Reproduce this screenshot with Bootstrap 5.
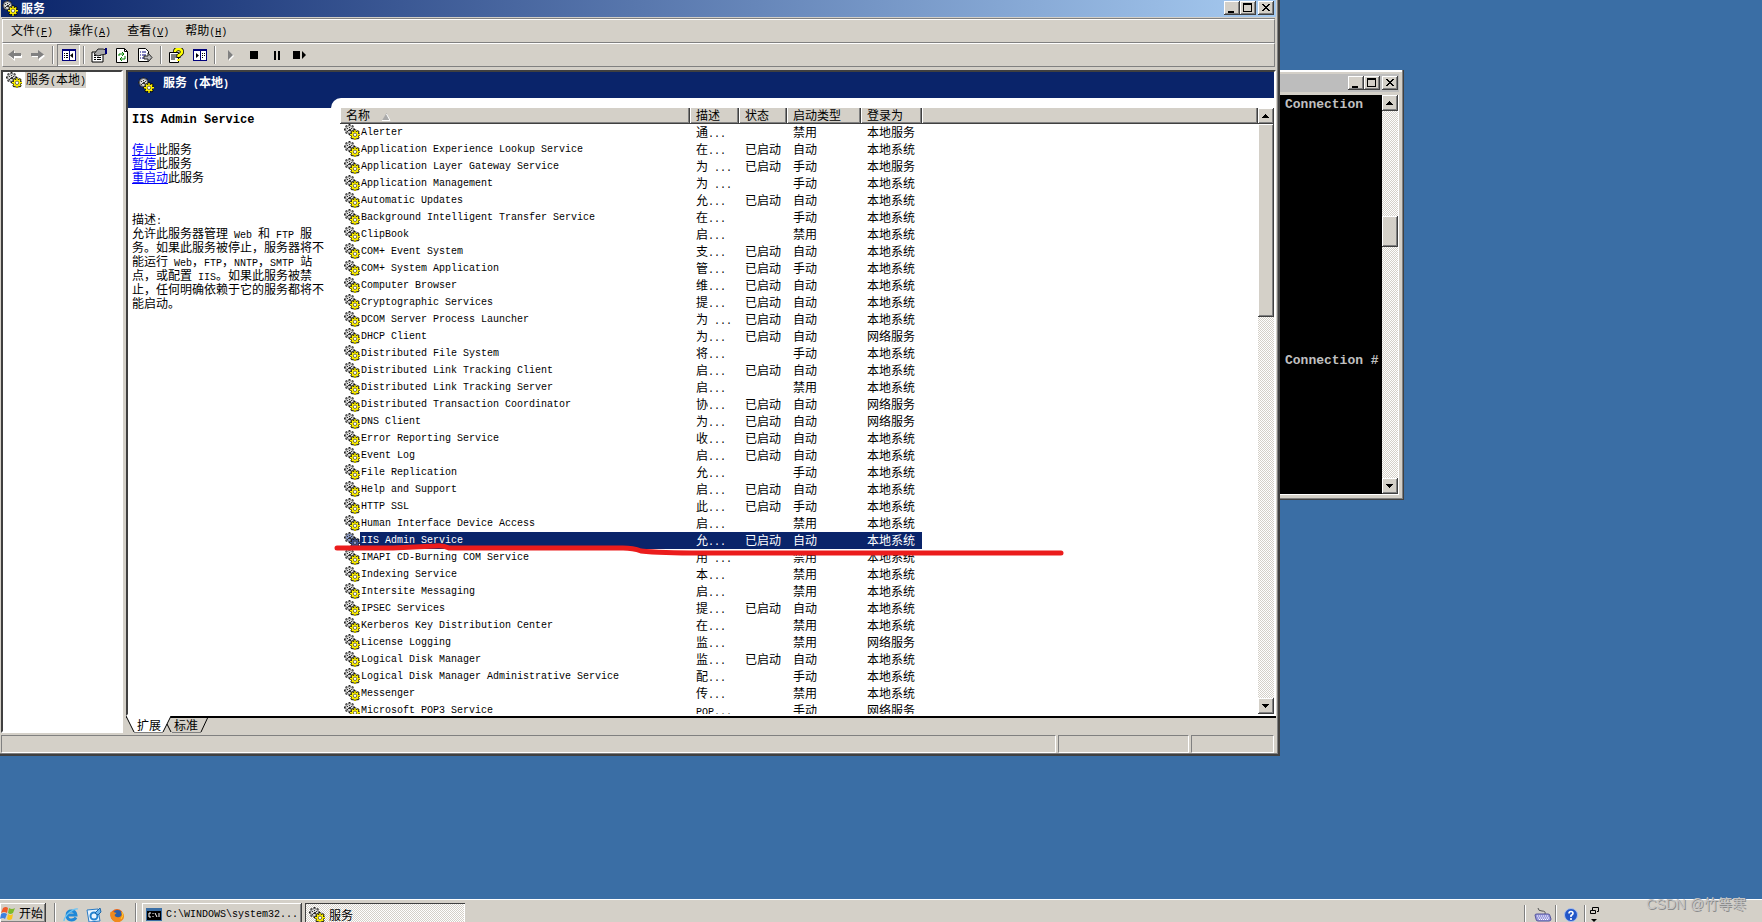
<!DOCTYPE html>
<html lang="zh-CN">
<head>
<meta charset="utf-8">
<meta name="viewport" content="width=device-width, initial-scale=1">
<title>服务</title>
<link rel="stylesheet" href="https://cdn.jsdelivr.net/npm/bootstrap@5.3.0/dist/css/bootstrap.min.css">
<style>
:root{--face:#d4d0c8;--shade:#808080;--dark:#404040;--navy:#0a246a;--desk:#3a6ea5}
body{font:12px/14px "Noto Sans CJK SC",sans-serif;color:#000;background:var(--desk);overflow:hidden}
button{font:inherit;color:inherit;border:0;padding:0;background:var(--face)}
svg{display:block;flex:none}
.lat{font-family:"Liberation Mono",monospace;font-size:10px;line-height:1px}
.face{background:var(--face)}
.dither{background:conic-gradient(#fff 25%,var(--face) 0 50%,#fff 0 75%,var(--face) 0) 0 0/2px 2px}
.raised{background:var(--face);box-shadow:inset -1px -1px var(--dark),inset 1px 1px #fff,inset -2px -2px var(--shade)}
.sunken{border:1px solid;border-color:var(--shade) #fff #fff var(--shade)}
.pane{border:2px solid;border-color:var(--dark) #fff #fff var(--dark);background:#fff}
.desktop{padding-bottom:143px}
.main-win{border-right:2px solid var(--dark);border-bottom:2px solid var(--dark);box-shadow:inset -1px -1px var(--shade);padding:0 2px 1px 1px}
.title-bar{height:17px;padding:0 2px 2px 1px;background:linear-gradient(90deg,#0a246a,#a6caf0);color:#fff;font-size:12px;font-weight:700}
.cap{width:16px;height:14px}
.bar{height:24px;border:1px solid;border-color:#fff var(--shade) var(--shade) #fff}
.bar button{height:22px}
.menu{gap:16px;padding:0 0 2px 8px}
.menu button,.tools button{background:none}
.sep{width:2px;height:18px;border-left:1px solid var(--shade);border-right:1px solid #fff;flex:none}
.tools button{width:23px;display:flex;align-items:center;justify-content:center}
.tools .sep{margin:0 3px}
.tools .on{box-shadow:inset 1px 1px var(--shade),inset -1px -1px #fff}
.tree{width:122px}
.node{background:var(--face);padding:0 0 0 1px;height:16px;line-height:13px}
.head{background:var(--navy);color:#fff;font-weight:700;height:36px}
.info{width:203px;padding:5px 0 0 4px;white-space:nowrap;flex:none}
.info h1{font:700 12px/14px "Liberation Mono",monospace;margin:0 0 15px}
.info a{color:#00f}
.list-wrap{margin-top:-10px;border-radius:10px 0 0 0;padding:10px 0 0 9px;background:#fff}
.grid{table-layout:fixed;width:100%;border-collapse:separate;border-spacing:0;white-space:nowrap}
.grid th{height:16px;padding:0 0 0 6px;font-weight:400;line-height:14px;vertical-align:top;background:var(--face);box-shadow:inset -1px -1px var(--dark),inset 1px 0 #fff,inset -2px -2px var(--shade)}
.grid td{height:17px;line-height:15px;padding:0 0 0 6px;overflow:hidden;vertical-align:top}
.grid td:first-child{padding-left:4px}
.nm{padding-left:1px;flex:1 1 0;height:17px;line-height:17px}
.sel{--y:#3a4f8c;--w:#8a9bc8}
.sel .nm,.sel td:not(:first-child):not(:last-child){background:var(--navy);color:#fff}
.sbar{width:16px;flex:none}
.sbar button{width:16px;height:16px;display:flex;align-items:center;justify-content:center;flex:none}
.tabs{height:17px;border-top:2px solid #000}
.tabs svg{top:-2px;left:0}
.tabs button{background:none;height:13px;line-height:13px}
.status{height:18px;gap:2px}
.con{margin-top:70px;width:124px;height:430px;border-right:1px solid var(--dark);border-bottom:1px solid var(--dark);box-shadow:inset -1px -1px var(--shade),inset 0 2px #fff;padding:4px 4px 4px 0}
.con-title{height:18px;background:#bdbdbd;padding:0 0 0 68px;margin-bottom:3px}
.term{font:700 13px/16px "Liberation Mono",monospace;color:#c0c0c0;background:#000;padding:2px 0 0 5px;white-space:nowrap;overflow:hidden}
.taskbar{height:23px;border-top:1px solid #fff;padding-top:3px}
.taskbar .sep{height:20px}
.task{height:23px;width:160px;padding-left:4px!important}
.mark-pen{left:333px;top:538px;pointer-events:none}
.wm{right:16px;bottom:8px;font:14px/20px "Liberation Sans","Noto Sans CJK SC",sans-serif;color:#c4c4c4;text-shadow:1px 1px #8c8c8c}
</style>
</head>
<body class="vh-100 d-flex flex-column">
<svg width="0" height="0" class="position-absolute">
<symbol id="gears" viewBox="0 0 16 16">
<path d="M5.500 0v11M0 5.500h11M1.700 1.700l7.600 7.600M9.300 1.700 1.700 9.300" stroke="#222" stroke-width="1.800"/>
<circle cx="5.5" cy="5.5" r="4" style="fill:var(--w,#d8d8d8)" stroke="#555" stroke-width=".8"/>
<path d="M3 4h1v1H3zM5 3h1v1H5zM7 4h1v1H7zM4 6h1v1H4zM5 5h2v2H5zM3 7h1v1H3z" fill="#333"/>
<path d="M11 5.500v10.500M5.700 10.800H16M7.200 7l7.600 7.600M14.800 7l-7.600 7.600" stroke="#000" stroke-width="2.600"/>
<circle cx="11" cy="10.800" r="3.800" fill="#000"/>
<path d="M11 6v10M6 10.800h10M7.700 7.500l6.600 6.600M14.300 7.500l-6.600 6.600" style="stroke:var(--y,#fff200)" stroke-width="1.400"/>
<circle cx="11" cy="10.800" r="2.600" fill="none" style="stroke:var(--y,#fff200)" stroke-width="1.600"/>
<circle cx="11" cy="10.800" r="1.700" style="fill:var(--w,#fff)" stroke="#222" stroke-width=".6"/>
</symbol>
<symbol id="min" viewBox="0 0 16 14"><path d="M4 10h6v2H4z"/></symbol>
<symbol id="max" viewBox="0 0 16 14"><path d="M3 2h9v9H3zM4 4v6h7V4z" fill-rule="evenodd"/></symbol>
<symbol id="cls" viewBox="0 0 16 14"><path d="M4 3h2v1h1v1h2V4h1V3h2v1h-1v1h-1v1H9v1h1v1h1v1h1v1h-2V9H9V8H7v1H6v1H4V9h1V8h1V7h1V6H6V5H5V4H4z"/></symbol>
<symbol id="up" viewBox="0 0 8 4"><path d="M3 0h1v1h1v1h1v1h1v1H0V3h1V2h1V1h1z"/></symbol>
<symbol id="down" viewBox="0 0 8 4"><path d="M0 0h7v1H6v1H5v1H4v1H3V3H2V2H1V1H0z"/></symbol>
</svg>

<main class="desktop d-flex flex-grow-1 align-items-stretch position-relative" style="min-height:0">
<section class="main-win face flex-grow-1 d-flex flex-column" style="min-width:0">
<header class="title-bar d-flex align-items-center flex-shrink-0">
<svg width="16" height="16"><use href="#gears"/></svg><span class="flex-grow-1" style="margin-left:3px">服务</span>
<button class="cap raised" aria-label="最小化"><svg width="16" height="14"><use href="#min"/></svg></button>
<button class="cap raised" aria-label="最大化"><svg width="16" height="14"><use href="#max"/></svg></button>
<button class="cap raised" style="margin-left:2px" aria-label="关闭"><svg width="16" height="14"><use href="#cls"/></svg></button>
</header>
<div class="flex-shrink-0" style="border-top:1px solid #808080;margin:1px 1px 3px 1px">
<nav class="bar menu d-flex align-items-center">
<button>文件<span class="lat">(<u>F</u>)</span></button><button>操作<span class="lat">(<u>A</u>)</span></button><button>查看<span class="lat">(<u>V</u>)</span></button><button>帮助<span class="lat">(<u>H</u>)</span></button>
</nav>
<div class="bar tools d-flex align-items-center">
<button aria-label="后退"><svg width="14" height="12"><path d="M7 2v4h7v3H7v3L1 7z" fill="#fff"/><path d="M6 1v3h7v3H6v3L0 5.500z" fill="#808080"/></svg></button>
<button aria-label="前进"><svg width="14" height="12"><path d="M8 2v3H1v3h7v4l6-5z" fill="#fff"/><path d="M7 1v3H0v3h7v3l6-4.500z" fill="#808080"/></svg></button>
<i class="sep"></i>
<button class="on dither" aria-label="显示树"><svg width="14" height="12"><path d="M0 0h14v12H0z" fill="#00007b"/><path d="M1 2h6v9H1zM8 2h5v9H8z" fill="#fff"/><path d="M2 4h1v1H2zM4 4h2v1H4zM2 6h1v1H2zM4 6h2v1H4zM2 8h1v1H2zM4 8h2v1H4zM11 4v5L8 6.500z"/></svg></button>
<i class="sep"></i>
<button aria-label="属性"><svg width="17" height="15"><path d="M1 4h11v10H1z" fill="#fff" stroke="#000"/><path d="M3 8h2M6 8h4M3 10h2M6 10h4M3 12h2M6 12h4" stroke="#000" transform="translate(0 -.5)"/><path d="M3 6l4-5h5l3 1v4l-5 1-3 1z" fill="#aaa" stroke="#222"/><path d="M14 0h2v6h-2z" fill="#00007b"/></svg></button>
<button aria-label="刷新"><svg width="13" height="15"><path d="M.5.500h8l3 3v11H.5z" fill="#fff" stroke="#000"/><path d="M8.500.500v3h3" fill="none" stroke="#000"/><path d="M3 8V6h5M6 4l2 2-2 2M9 8v3H4m2-2-2 2 2 2" fill="none" stroke="#008000"/></svg></button>
<button aria-label="导出列表"><svg width="15" height="15"><path d="M.5.500h7l3 3v10H.5z" fill="#fff" stroke="#000"/><path d="M2 4h1M4 4h4M2 7h1M4 7h4M2 10h1M4 10h4" stroke="#00007b"/><path d="M6 8h4V5l4 4.500L10 14v-3H6z" fill="#bbb" stroke="#222"/></svg></button>
<i class="sep"></i>
<button aria-label="帮助"><svg width="15" height="15"><path d="M.5 4.500h9v10h-9z" fill="#fff" stroke="#000"/><path d="M2 7h6M2 9h6M2 11h4" stroke="#000"/><path d="M6 4q0-3 3.500-3T13 4q0 2-3.500 3.500V10" fill="none" stroke="#000" stroke-width="4"/><path d="M6 4q0-3 3.500-3T13 4q0 2-3.500 3.500V9M9.500 11v2" fill="none" stroke="#ff0" stroke-width="2.500"/></svg></button>
<button aria-label="显示窗格"><svg width="14" height="12"><path d="M0 0h14v12H0z" fill="#00007b"/><path d="M1 2h6v9H1zM8 2h5v9H8z" fill="#fff"/><path d="M9 4h1v1H9zM11 4h1v1h-1zM9 6h1v1H9zM11 6h1v1h-1zM9 8h1v1H9zM3 4v5l3-2.500z"/></svg></button>
<i class="sep"></i>
<button aria-label="启动"><svg width="7" height="11"><path d="M2 1v10l5-5z" fill="#fff"/><path d="M1 0v10l5-5z" fill="#808080"/></svg></button>
<button aria-label="停止"><svg width="8" height="8"><path d="M0 0h8v8H0z"/></svg></button>
<button aria-label="暂停"><svg width="6" height="9"><path d="M0 0h2v9H0zM4 0h2v9H4z"/></svg></button>
<button aria-label="重新启动"><svg width="13" height="8"><path d="M0 0h7v8H0zM9 0v8l4-4z"/></svg></button>
</div>
</div>
<div class="d-flex flex-grow-1" style="min-height:0;gap:3px">
<aside class="tree pane d-flex flex-shrink-0 align-items-start"><svg width="16" height="16" style="margin-left:3px"><use href="#gears"/></svg><span class="node" style="margin-left:3px">服务<span class="lat">(</span>本地<span class="lat">)</span></span></aside>
<div class="d-flex flex-column flex-grow-1" style="min-width:0">
<div class="pane d-flex flex-column flex-grow-1" style="min-height:0">
<div class="head flex-shrink-0 d-flex align-items-start"><svg width="16" height="16" style="margin:5px 9px 0 10px"><use href="#gears"/></svg><span style="margin-top:3px">服务<span class="lat">&nbsp;(</span>本地<span class="lat">)</span></span></div>
<div class="d-flex flex-grow-1" style="min-height:0">
<section class="info">
<h1>IIS Admin Service</h1>
<div><a href="#">停止</a>此服务</div><div><a href="#">暂停</a>此服务</div><div><a href="#">重启动</a>此服务</div>
<p class="mb-0" style="margin-top:28px">描述<span class="lat">:</span><br>允许此服务器管理<span class="lat"> Web </span>和<span class="lat"> FTP </span>服<br>务。如果此服务被停止，服务器将不<br>能运行<span class="lat"> Web</span>，<span class="lat">FTP</span>，<span class="lat">NNTP</span>，<span class="lat">SMTP </span>站<br>点，或配置<span class="lat"> IIS</span>。如果此服务被禁<br>止，任何明确依赖于它的服务都将不<br>能启动。</p>
</section>
<div class="list-wrap flex-grow-1 d-flex" style="min-width:0">
<div class="flex-grow-1 overflow-hidden">
<table class="grid"><colgroup><col style="width:350px"><col style="width:49px"><col style="width:48px"><col style="width:74px"><col style="width:61px"><col></colgroup>
<thead><tr><th>名称<svg width="9" height="8" class="d-inline-block" style="margin-left:12px"><path d="M4.500 0 0 7.500h8z" fill="#aaa"/><path d="M4.500 1 8 7.500H0" fill="none" stroke="#fff"/></svg></th><th>描述</th><th>状态</th><th>启动类型</th><th>登录为</th><th></th></tr></thead>
<tbody id="rows"></tbody></table>
</div>
<div class="sbar dither d-flex flex-column"><button class="raised" aria-label="向上"><svg width="8" height="4"><use href="#up"/></svg></button><div class="raised" style="height:193px"></div><button class="raised mt-auto" aria-label="向下"><svg width="8" height="4"><use href="#down"/></svg></button></div>
</div>
</div>
</div>
<div class="tabs flex-shrink-0 d-flex position-relative"><svg class="position-absolute" width="84" height="17"><path d="M0 0 8 16H37L45 0z" fill="#fff"/><path d="M0 0 8 16M37 16 45 0M41 8l4 8M75 16 82 1" stroke="#000" fill="none"/><path d="M8 16.500H37M46 16.500H75" stroke="#808080"/></svg><button class="position-relative" style="margin-left:11px">扩展</button><button class="position-relative" style="margin-left:13px">标准</button></div>
</div>
</div>
<footer class="status d-flex flex-shrink-0" style="margin-top:2px"><div class="sunken flex-grow-1"></div><div class="sunken" style="width:131px"></div><div class="sunken" style="width:83px;margin-right:2px"></div></footer>
</section>

<div class="flex-shrink-0" style="width:482px">
<section class="con face d-flex flex-column">
<div class="con-title d-flex align-items-center"><button class="cap raised" aria-label="最小化"><svg width="16" height="14"><use href="#min"/></svg></button><button class="cap raised" aria-label="最大化"><svg width="16" height="14"><use href="#max"/></svg></button><button class="cap raised" style="margin-left:2px" aria-label="关闭"><svg width="16" height="14"><use href="#cls"/></svg></button></div>
<div class="d-flex flex-grow-1" style="border-right:1px solid #fff;border-bottom:1px solid #fff"><div class="term flex-grow-1" style="width:0">Connection<div style="margin-top:240px">Connection #</div></div>
<div class="sbar dither d-flex flex-column"><button class="raised" aria-label="向上"><svg width="8" height="4"><use href="#up"/></svg></button><div class="raised" style="height:31px;margin-top:105px"></div><button class="raised mt-auto" aria-label="向下"><svg width="8" height="4"><use href="#down"/></svg></button></div></div>
</section>
</div>
<svg class="mark-pen position-absolute" width="732" height="22"><path d="M4 10H60L102 8q8-1 14 2H290q10 0 18 3 20 2 60 2H728" fill="none" stroke="#eb1c1c" stroke-width="5" stroke-linecap="round"/></svg>
</main>

<footer class="taskbar face d-flex position-relative flex-shrink-0">
<button class="raised d-flex align-items-center" style="width:46px;height:20px"><svg width="16" height="16" style="margin-right:3px"><path d="M3 3q3-2 5 0L7 8Q4 6 1 8z" fill="#f05a28"/><path d="M9 3q3 2 6 0l-2 5q-3 2-5 0z" fill="#7cbb2c"/><path d="M1 9q3-2 6 0l-2 5q-2-2-5 0z" fill="#3d7fe0"/><path d="M8 9q2 2 5 0l-1 5q-3 2-5 0z" fill="#fbc31c"/></svg>开始</button>
<i class="sep" style="margin:0 7px 0 8px"></i>
<div class="d-flex align-items-center" style="gap:7px;height:23px">
<svg width="16" height="16"><path d="M13 10.500Q11.500 13 8.500 13 4 13 4 8.500T8.500 4Q12.500 4 13 8H5" fill="none" stroke="#1e88d8" stroke-width="2.800"/><path d="M1 14q0-4 6-9 5-4 8-3" fill="none" stroke="#6cc4f4" stroke-width="1.300"/></svg>
<svg width="16" height="16"><path d="M1 3l11-1 2 12-11 1z" fill="#e8f4ff" stroke="#2a7bc4"/><circle cx="8" cy="9" r="3.500" fill="none" stroke="#2583d0" stroke-width="2"/><path d="M9 6l5-5 1 4-3 3z" fill="#6db5ec" stroke="#1b66aa"/></svg>
<svg width="16" height="16"><circle cx="8" cy="8.500" r="6.500" fill="#e8641a"/><circle cx="8.500" cy="7" r="4" fill="#2b5fa8"/><path d="M1.500 5q2-1 3 0l3 1-2 2q1 3 5 2 3-1 3-5 3 5 0 8-4 4-9 1Q0 10 1.500 5z" fill="#f08a1c"/><path d="M13 5q2 4-1 7" stroke="#fcd22c" fill="none"/></svg>
</div>
<i class="sep" style="margin:0 5px 0 10px"></i>
<button class="task raised d-flex align-items-center"><svg width="16" height="13" style="margin-right:4px"><path d="M0 0h16v13H0z" fill="#3a6ea5"/><path d="M1 3h14v9H1z"/><path d="M5 5H3v4h2M7 5v1M7 8v1M9 5l2 4M13 5v4" stroke="#fff" fill="none"/></svg><span class="lat">C:\WINDOWS\system32...</span></button>
<button class="task dither d-flex align-items-center" style="margin-left:3px;box-shadow:inset 1px 1px var(--dark),inset -1px 0 #fff"><svg width="16" height="16" style="margin-right:4px"><use href="#gears"/></svg>服务</button>
<div class="ms-auto d-flex align-items-center" style="width:238px;height:23px">
<i class="sep"></i><svg width="18" height="16" style="margin-left:8px"><path d="M4 1q0 3 4 3t3 3" fill="none" stroke="#555"/><path d="M1 8q0-1 2-1h11q2 0 2 2l1 3q0 2-2 2H4q-2 0-2-2z" fill="#9a9ade" stroke="#54549a"/><path d="M3 9h11M4 11h11M5 12.500h9" stroke="#fff" stroke-dasharray="1 1"/></svg>
<i class="sep" style="margin-left:3px"></i><svg width="16" height="16" style="margin-left:6px"><circle cx="8" cy="8" r="6.500" fill="#2256c8" stroke="#a9c0ee"/><path d="M6 6.500Q6 4.500 8 4.500t2 2Q10 7.500 8 8.500V10M8 11v2" fill="none" stroke="#fff" stroke-width="1.600"/></svg>
<i class="sep" style="margin-left:5px"></i><svg width="10" height="20" style="margin-left:4px"><path d="M2.500 5V2.500h6v4H7M.5 5.500h5v3h-5z" fill="none" stroke="#000"/><path d="M1 14h6l-3 3z"/></svg>
</div>
<span class="wm position-absolute">CSDN @竹等寒</span>
</footer>
<script src="https://cdn.jsdelivr.net/npm/bootstrap@5.3.0/dist/js/bootstrap.bundle.min.js"></script>
<script>
// name | description | started | start type | log on as (N = network, L = local service)
const services = `Alerter|通|0|禁用|L
Application Experience Lookup Service|在|1|自动|S
Application Layer Gateway Service|为 |1|手动|L
Application Management|为 |0|手动|S
Automatic Updates|允|1|自动|S
Background Intelligent Transfer Service|在|0|手动|S
ClipBook|启|0|禁用|S
COM+ Event System|支|1|自动|S
COM+ System Application|管|1|手动|S
Computer Browser|维|1|自动|S
Cryptographic Services|提|1|自动|S
DCOM Server Process Launcher|为 |1|自动|S
DHCP Client|为|1|自动|N
Distributed File System|将|0|手动|S
Distributed Link Tracking Client|启|1|自动|S
Distributed Link Tracking Server|启|0|禁用|S
Distributed Transaction Coordinator|协|1|自动|N
DNS Client|为|1|自动|N
Error Reporting Service|收|1|自动|S
Event Log|启|1|自动|S
File Replication|允|0|手动|S
Help and Support|启|1|自动|S
HTTP SSL|此|1|手动|S
Human Interface Device Access|启|0|禁用|S
IIS Admin Service|允|1|自动|S
IMAPI CD-Burning COM Service|用 |0|禁用|S
Indexing Service|本|0|禁用|S
Intersite Messaging|启|0|禁用|S
IPSEC Services|提|1|自动|S
Kerberos Key Distribution Center|在|0|禁用|S
License Logging|监|0|禁用|N
Logical Disk Manager|监|1|自动|S
Logical Disk Manager Administrative Service|配|0|手动|S
Messenger|传|0|禁用|S
Microsoft POP3 Service|POP|0|手动|N`;
const accounts = {L: '本地服务', S: '本地系统', N: '网络服务'};
document.getElementById('rows').innerHTML = services.split('\n').map(line => {
  const [name, desc, on, type, acc] = line.split('|');
  const d = desc === 'POP' ? '<span class="lat">POP...</span>' : desc.trim() + '<span class="lat">' + (desc.endsWith(' ') ? ' ' : '') + '...</span>';
  return `<tr class="${name === 'IIS Admin Service' ? 'sel' : ''}"><td><div class="d-flex"><svg width="16" height="16"><use href="#gears"/></svg><span class="nm lat">${name}</span></div></td><td>${d}</td><td>${on === '1' ? '已启动' : ''}</td><td>${type}</td><td>${accounts[acc]}</td><td></td></tr>`;
}).join('');
</script>
</body>
</html>
